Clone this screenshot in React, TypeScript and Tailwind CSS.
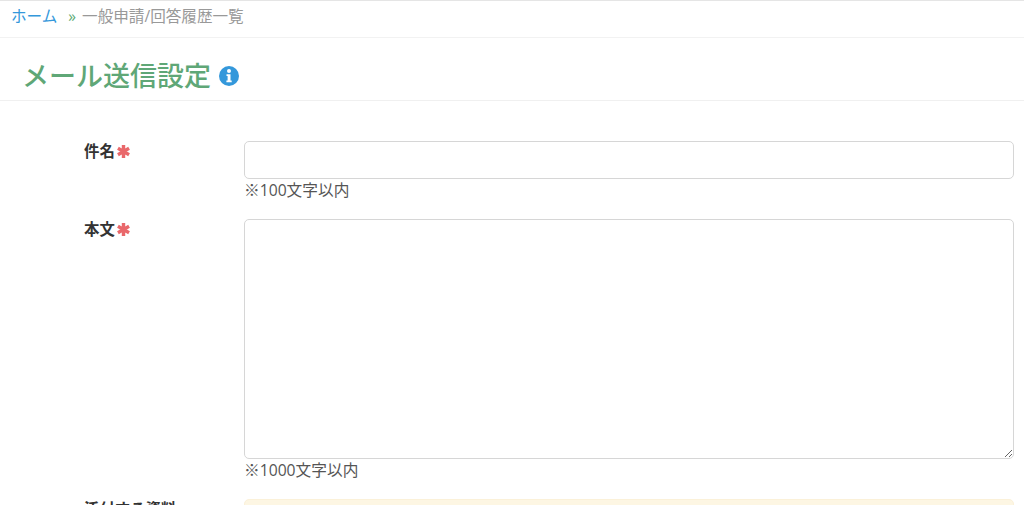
const font = { fontFamily: '"Open Sans", "Noto Sans CJK JP", sans-serif' };

function Asterisk() {
  return (
    <svg viewBox="0 0 14 14" className="w-[15px] h-[15px] shrink-0 ml-[1px] mb-[2px]" fill="none" stroke="#e9686b" strokeWidth="3.2">
      <path d="M7 1v12M1.8 4l10.4 6M12.2 4L1.8 10" />
    </svg>
  );
}

function InfoIcon() {
  return (
    <svg viewBox="0 0 20 20" className="w-5 h-5 ml-2 mt-[2px]">
      <circle cx="10" cy="10" r="10" fill="#3498db" />
      <circle cx="10" cy="5" r="2" fill="#fff" />
      <path d="M7.5 8.2h4v6.3h1.2v1.8H7.4v-1.8h1.2v-4.5H7.5z" fill="#fff" />
    </svg>
  );
}

function Label({ text }: { text: string }) {
  return (
    <div className="w-[244px] pl-[84px] pt-[1px] shrink-0 flex items-center h-[21px] font-bold text-[15.4px] text-[#333]">
      {text}
      <Asterisk />
    </div>
  );
}

export default function App() {
  return (
    <div className="h-[505px] overflow-hidden bg-white border-t border-[#e5e5e5]" style={font}>
      <div className="h-[37px] flex items-center pl-[11px] border-b border-[#f2f2f2] text-[15.6px] pb-[5px]">
        <span className="text-[#3498db]">ホーム</span>
        <span className="text-[#5bab74] ml-[11px] mr-[6px]">»</span>
        <span className="text-[#999]">一般申請/回答履歴一覧</span>
      </div>
      <div className="h-[63px] flex items-center pl-[22px] border-b border-[#f0f0f0] pt-[12px]">
        <h1 className="text-[27px] font-medium text-[#5fa777] leading-none">メール送信設定</h1>
        <InfoIcon />
      </div>
      <div className="pt-10 pr-[10px]">
        <div className="flex">
          <Label text="件名" />
          <div className="flex-1">
            <input className="block w-full h-[38px] border border-[#d6d6d6] rounded-[5px] bg-white" />
            <p className="text-[15.7px] leading-5 mt-[1px] text-[#555]">※100文字以内</p>
          </div>
        </div>
        <div className="flex mt-[19px]">
          <Label text="本文" />
          <div className="flex-1">
            <textarea className="block w-full h-[240px] border border-[#d6d6d6] rounded-[5px] bg-white" />
            <p className="text-[15.7px] leading-5 mt-[1px] text-[#555]">※1000文字以内</p>
          </div>
        </div>
        <div className="flex mt-[19px]">
          <div className="w-[244px] pl-[84px] shrink-0 font-bold text-[15.4px] text-[#333] leading-5 pt-[1px]">添付する資料</div>
          <div className="flex-1 h-10 bg-[#fdf6e3] border border-[#fbf1d9] rounded-[5px]" />
        </div>
      </div>
    </div>
  );
}
